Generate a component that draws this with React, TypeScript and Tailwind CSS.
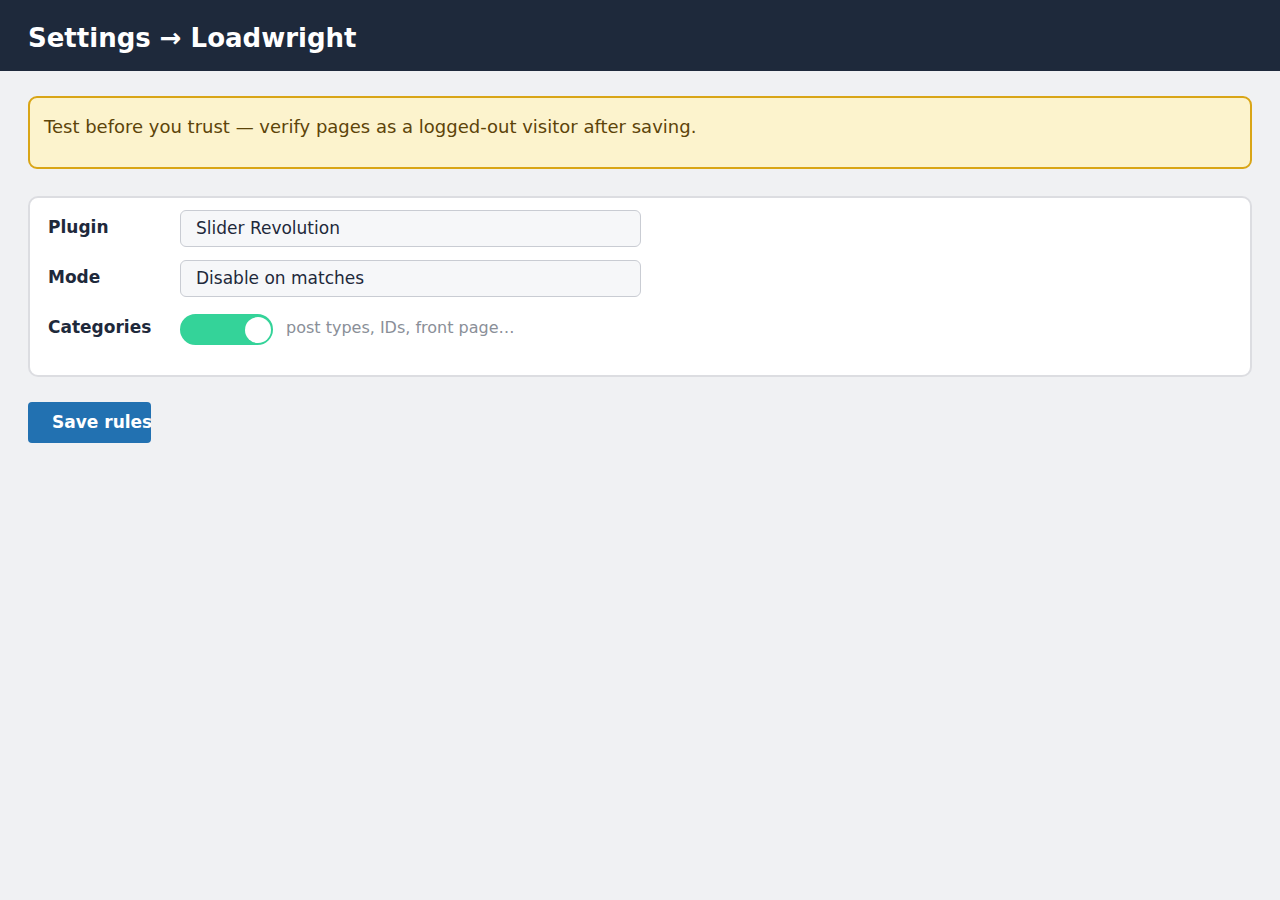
export default function App() {
  return (
    <div className="min-h-screen bg-[#f0f1f3] font-['DejaVu_Sans',sans-serif]">
      {/* Header */}
      <header className="h-[71px] bg-[#1e293b] px-7 flex items-center">
        <h1 className="text-white text-[26px] font-bold leading-none pt-[4px]">Settings → Loadwright</h1>
      </header>

      <main className="px-7 pt-[25px]">
        {/* Notice */}
        <div className="h-[73px] rounded-[9px] border-2 border-[#d9a516] bg-[#fcf3cd] px-[14px] pt-[19px]">
          <p className="text-[18px] leading-[20px] text-[#5c4409]">
            Test before you trust — verify pages as a logged-out visitor after saving.
          </p>
        </div>

        {/* Rules card */}
        <div className="mt-[27px] h-[181px] rounded-[10px] border-2 border-[#dcdde1] bg-white px-[18px] pt-[12px]">
          <div className="flex flex-col gap-[13px]">
            <div className="flex items-start">
              <label className="w-[132px] pt-[7px] text-[17px] leading-[20px] font-bold text-[#1e293b]">Plugin</label>
              <div className="w-[461px] h-[37px] rounded-[6px] border border-[#c9ccd3] bg-[#f6f7f9] px-[15px] flex items-center text-[17px] text-[#1e293b]">
                Slider Revolution
              </div>
            </div>
            <div className="flex items-start">
              <label className="w-[132px] pt-[7px] text-[17px] leading-[20px] font-bold text-[#1e293b]">Mode</label>
              <div className="w-[461px] h-[37px] rounded-[6px] border border-[#c9ccd3] bg-[#f6f7f9] px-[15px] flex items-center text-[17px] text-[#1e293b]">
                Disable on matches
              </div>
            </div>
            <div className="flex items-start">
              <label className="w-[132px] pt-[7px] text-[17px] leading-[20px] font-bold text-[#1e293b]">Categories</label>
              <div className="flex items-center gap-[13px] pt-[4px]">
                <div className="w-[93px] h-[31px] rounded-full bg-[#34d399] border-2 border-[#34d399] flex items-center justify-end">
                  <div className="w-[26px] h-[26px] rounded-full bg-white" />
                </div>
                <span className="text-[16px] text-[#8a8f98] -mt-[4px]">post types, IDs, front page…</span>
              </div>
            </div>
          </div>
        </div>

        {/* Save */}
        <button className="mt-[25px] w-[123px] h-[41px] overflow-hidden whitespace-nowrap rounded-[4px] bg-[#2271b1] pl-[24px] text-left text-[17px] font-bold text-white">
          Save rules
        </button>
      </main>
    </div>
  );
}
